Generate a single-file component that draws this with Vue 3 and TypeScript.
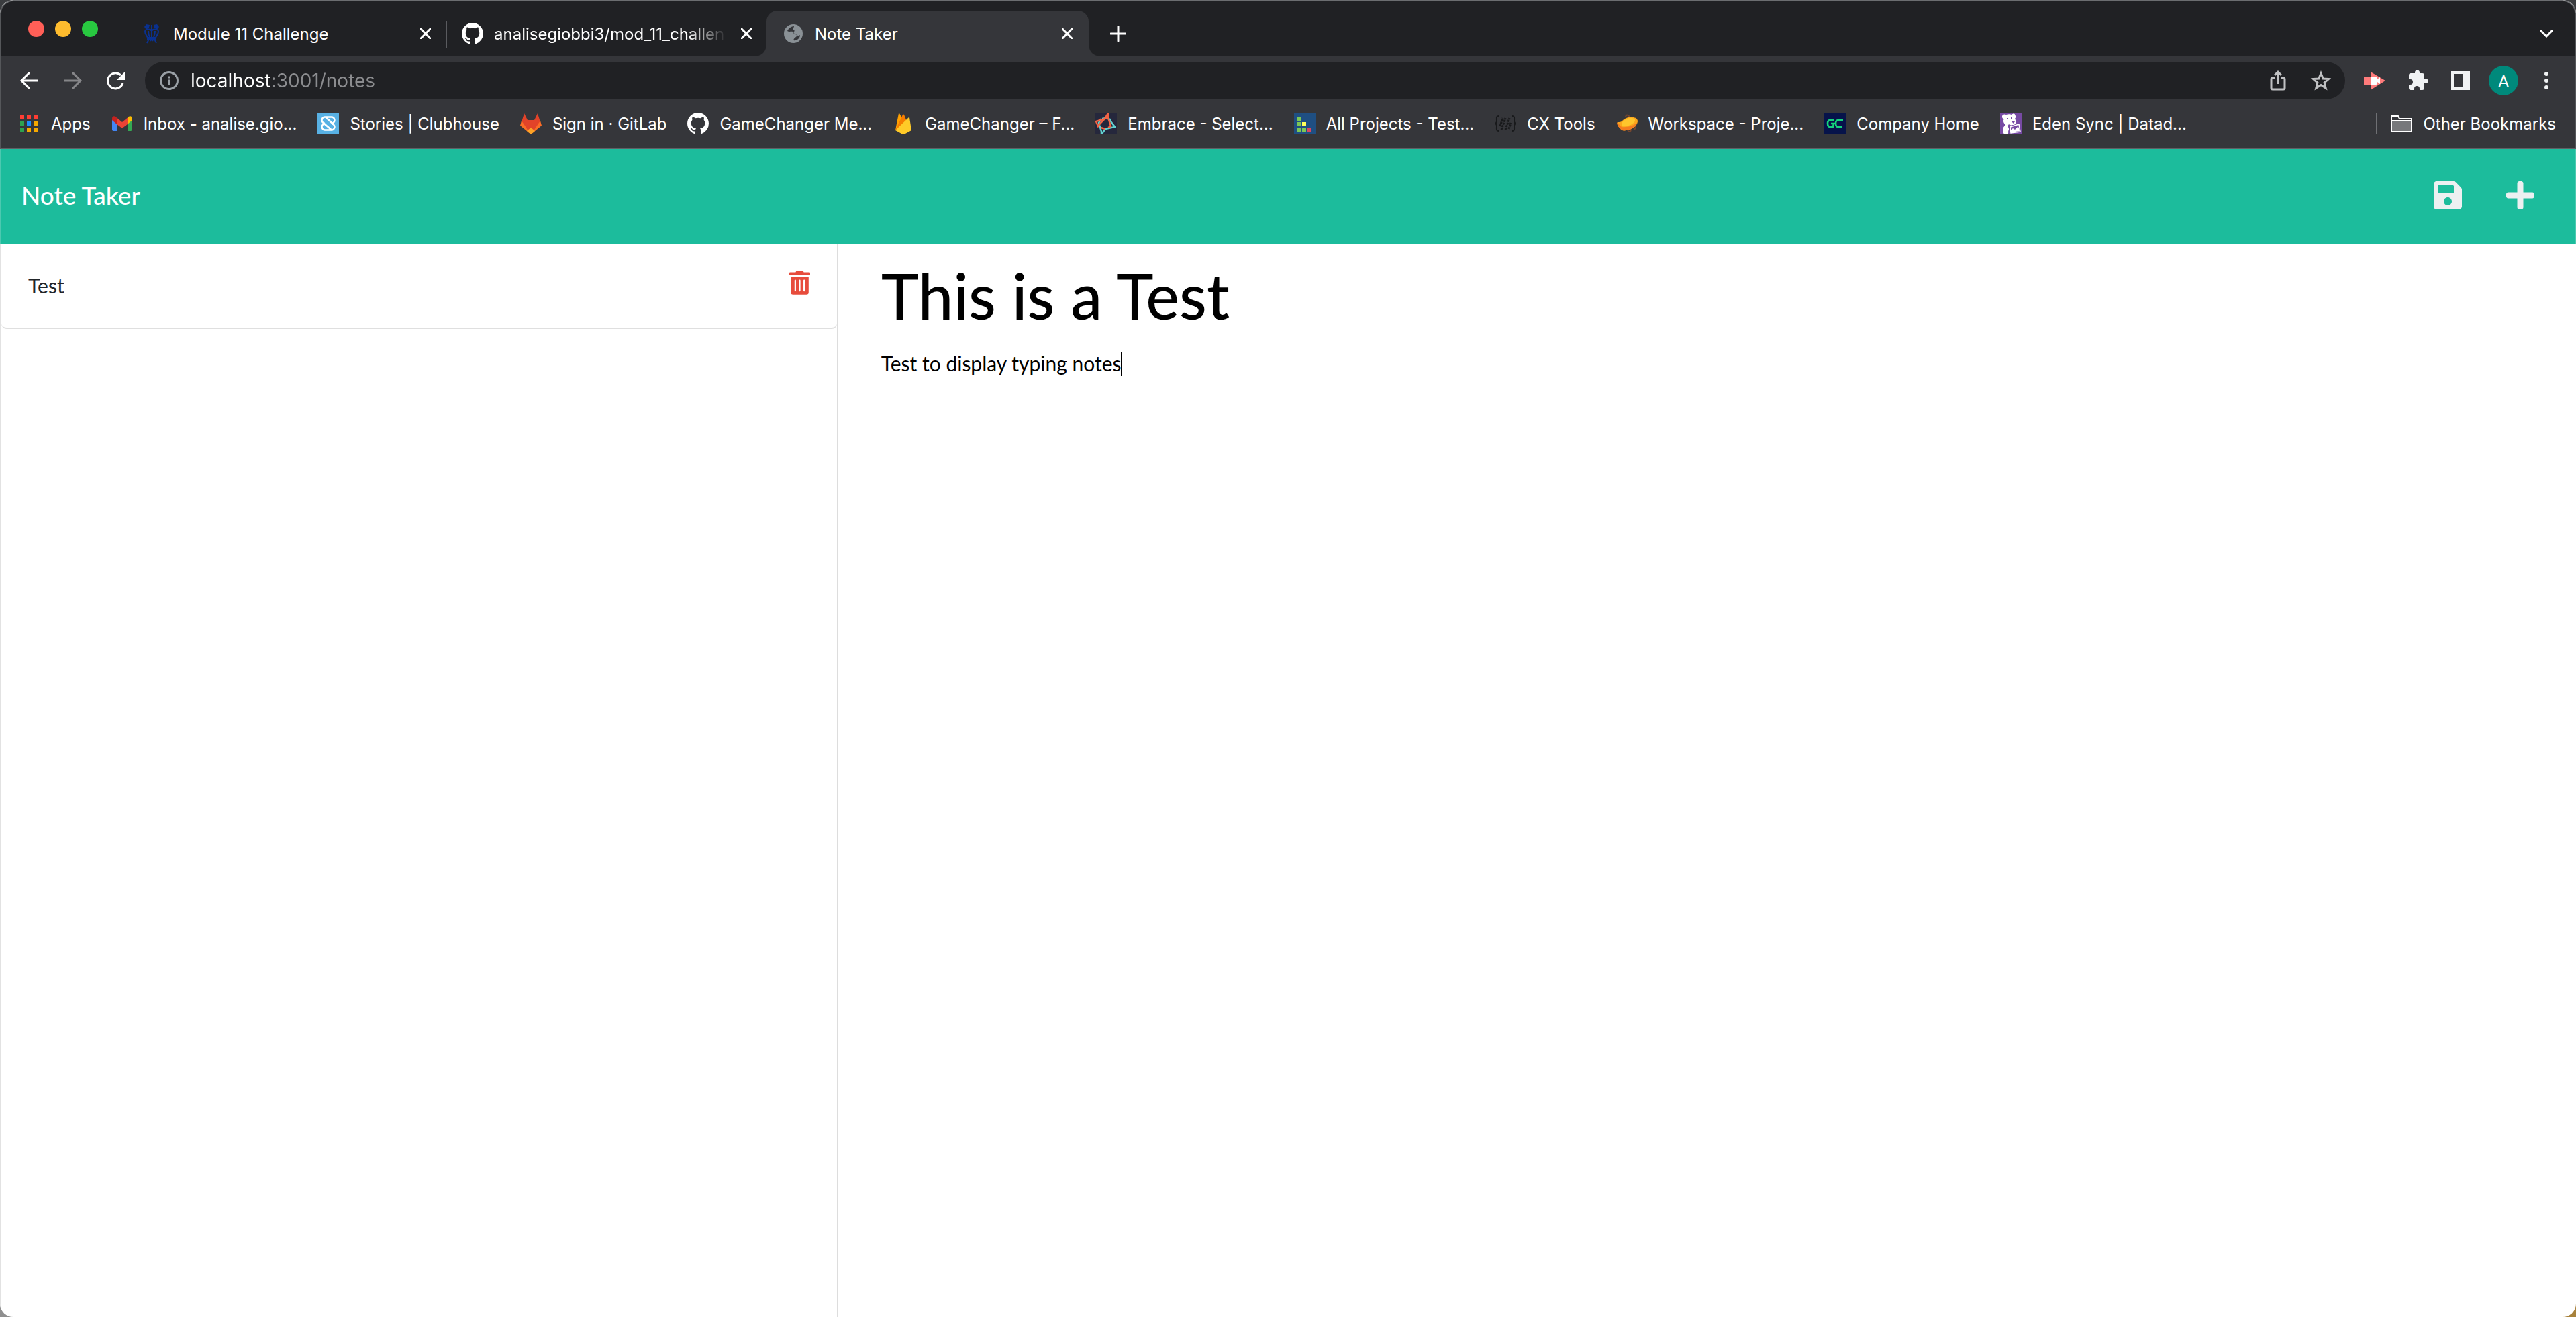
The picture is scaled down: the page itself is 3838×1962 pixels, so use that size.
<script setup lang="ts">
import { ref } from 'vue'

interface Bookmark {
  label: string
  icon: string
}

const github =
  '<path fill="#fff" transform="scale(2)" d="M8 0C3.58 0 0 3.58 0 8c0 3.54 2.29 6.53 5.47 7.59.4.07.55-.17.55-.38 0-.19-.01-.82-.01-1.49-2.01.37-2.53-.49-2.69-.94-.09-.23-.48-.94-.82-1.13-.28-.15-.68-.52-.01-.53.63-.01 1.08.58 1.23.82.72 1.21 1.87.87 2.33.66.07-.52.28-.87.51-1.07-1.78-.2-3.64-.89-3.64-3.95 0-.87.31-1.59.82-2.15-.08-.2-.36-1.02.08-2.12 0 0 .67-.21 2.2.82.64-.18 1.32-.27 2-.27s1.36.09 2 .27c1.53-1.04 2.2-.82 2.2-.82.44 1.1.16 1.92.08 2.12.51.56.82 1.27.82 2.15 0 3.07-1.87 3.75-3.65 3.95.29.25.54.73.54 1.48 0 1.07-.01 1.93-.01 2.2 0 .21.15.46.55.38A8.01 8.01 0 0 0 16 8c0-4.42-3.58-8-8-8z"/>'

const crest =
  '<g fill="none" stroke="#0a318f" stroke-width="2"><path d="M6 13c0-4 8-5 10-1 2-4 10-3 10 1 0 4-3 6-4 9H10c-1-3-4-5-4-9zM16 8v14M11 12c0 4 1 7 2 9M21 12c0 4-1 7-2 9M10 23h12M12 24l-3 6M13 24l2 3M20 24l3 6M19 24l-2 3"/></g><g fill="#0a318f"><path d="M5 6l3-4 5 1-1 4-4 3zM27 6l-3-4-5 1 1 4 4 3zM9 23h14v3H9zM15 3h2v7h-2z"/></g>'

const globe =
  '<circle cx="16" cy="16" r="14" fill="#8a9196"/><path fill="#35363a" d="M17 5c-4 0-8 3-10 7 3 2 6 0 8 1 2 1 1 4 3 4 3 0 4 2 2 4-2 1-3 2-4 5 5 1 10-3 10-8-2 2-4 1-6-1-3-1-4-2-3-4 1-1 1-2-1-3-1-2 1-3 1-5z"/>'

const bookmarks: Bookmark[] = [
  {
    label: 'Inbox - analise.gio...',
    icon: '<path fill="#4285f4" d="M1 9l7 5v13H3.500a2.500 2.500 0 0 1-2.500-2.500z"/><path fill="#34a853" d="M31 9l-7 5v13h4.500a2.500 2.500 0 0 0 2.500-2.500z"/><path fill="#fbbc04" d="M24 7.500C27 4 31 5 31 9v2l-7 6z"/><path fill="#ea4335" d="M8 7.500l8 6.500 8-6.500V17l-8 6-8-6z"/><path fill="#c5221f" d="M8 7.500C5 4 1 5 1 9v2l7 6z"/>',
  },
  {
    label: 'Stories | Clubhouse',
    icon: '<path fill="#58b1e4" d="M0 0h32v32H0z"/><path fill="none" stroke="#fff" stroke-width="2.400" stroke-linejoin="round" d="M11 6.500h10c4 0 6 5 3 8l-3 2.500M11 6.500c-4 0-6 5-3 8l13 11M21 25.500H11c-4 0-6-5-3-8l3-2.500M12 6.500l12 11c3 3 1 8-3 8"/>',
  },
  {
    label: 'Sign in · GitLab',
    icon: '<path fill="#e24329" d="M6 1l5 10h10l5-10 4 13-14 17L2 14z"/><path fill="#fc6d26" d="M2 12l14 20 14-20 2 7-16 13L0 19z"/><path fill="#e24329" d="M4 11h24L16 24z"/><path fill="#fca326" d="M16 22l6 5-6 5-6-5z"/>',
  },
  { label: 'GameChanger Me...', icon: github },
  {
    label: 'GameChanger – F...',
    icon: '<path fill="#ffa000" d="M4 26L9 1c0-1 1-1 1 0l5 9z"/><path fill="#f57c00" d="M4 26L15 3c0-1 1-1 2 0l4 10z"/><path fill="#ffca28" d="M4 26L24 7c1-1 1 0 1 0l3 19-11 6c-1 0-1 0-2 0z"/>',
  },
  {
    label: 'Embrace - Select...',
    icon: '<path fill="#25273c" d="M0 0h32v32H0z"/><g fill="none" stroke-width="2.500"><path stroke="#62d1cf" d="M9 9L5 15l4 13v4l6-8 14-3-6-8-1-3-6-2-6 1"/><path stroke="#f26444" d="M19 0v7l4 13-4 2M19 1l-5 8L1 13l3 7 4-5 6-6 6-1M8 22l7 2"/></g>',
  },
  {
    label: 'All Projects - Test...',
    icon: '<path fill="#1f4f82" d="M0 0h32v32H0z"/><path fill="#7dc855" d="M4 6h6v6H4zM4 14h6v6H4zM4 22h6v6H4zM12 22h6v6h-6z"/><path fill="#ffff5a" d="M12 14h6v6h-6z"/><path fill="#dd465e" d="M20 22h6v6h-6z"/>',
  },
  {
    label: 'CX Tools',
    icon: '<g fill="none" stroke="#18191b" stroke-width="2"><path d="M6 5c-4 0-3 3-3 7 0 3-1 4-3 4 2 0 3 1 3 4 0 4-1 7 3 7M26 5c4 0 3 3 3 7 0 3 1 4 3 4-2 0-3 1-3 4 0 4 1 7-3 7"/><path stroke-width="3" d="M8 20l4-12M10 25l6-17M16 25l6-17M21 24l3-9" stroke-dasharray="3 1"/></g>',
  },
  {
    label: 'Workspace - Proje...',
    icon: '<path fill="none" stroke="#76462f" stroke-width="2" d="M14 7c0-5 5-4 6 0M17 26c3 4 6 1 4-3M26 18c4 1 4 5 0 7"/><path fill="#fba61c" d="M2 14c3 0 5 0 7-2 4-4 9-6 15-5 5 0 8 2 8 6-1 7-8 12-17 13-4 1-8 0-9-3-3-2-5-5-4-9z"/><path fill="#ffc52c" d="M9 14c4-4 9-7 15-6 5 1 5 4 2 7-5 4-11 6-17 5z"/><path fill="#f57c20" d="M1 14l7 7c9 1 18-2 23-6-2 6-9 10-16 11-4 1-8 0-9-3-3-2-5-5-5-9z"/>',
  },
  {
    label: 'Company Home',
    icon: '<path fill="#06134a" d="M0 0h32v32H0z"/><path fill="none" stroke="#14d47b" stroke-width="2.600" stroke-linejoin="round" d="M14 11H9c-4 0-4 3-4 5s0 5 4 5h4l1-5h-4M28 11h-7c-4 0-4 3-4 5s0 5 4 5h6M15 16h3"/>',
  },
  {
    label: 'Eden Sync | Datad...',
    icon: '<path fill="#774aa4" d="M0 0h32v32H0z"/><path fill="#fff" d="M3 5c1-3 4-3 6-2 3-1 6-1 8 0 2-2 5-2 5 0 2 3 1 5 0 6l2 4c0 3-2 5-5 5-3 1-5 0-6-1l-2 3c2 2 3 5 1 7 1 2 0 4-3 5-3 0-5-2-4-5-2-4 1-7 3-9C5 15 4 12 6 9 3 9 3 7 3 5z"/><path fill="none" stroke="#fff" stroke-width="1.500" d="M15 21l13-4 2 11-14 2z"/><path fill="#fff" d="M16 26l3-3 3 2 4-4 2 1 1 5-13 2z"/><path fill="#774aa4" d="M10 8h2v2h-2zM16 7h2v2h-2zM17 13h5l-2 3z"/>',
  },
]

const url = ref('localhost:3001/notes')
const noteTitle = ref('This is a Test')
const noteText = ref('Test to display typing notes')
const notes = ref<string[]>(['Test'])
</script>

<template>
  <div class="window">
    <header class="chrome">
      <div class="tabstrip">
        <div class="lights">
          <button class="light red" aria-label="Close window"></button>
          <button class="light yellow" aria-label="Minimise window"></button>
          <button class="light green" aria-label="Zoom window"></button>
        </div>
        <div class="tab">
          <svg class="favicon" viewBox="0 0 32 32" v-html="crest"></svg>
          <span class="tab-title">Module 11 Challenge</span>
          <button class="close" aria-label="Close tab">
            <svg viewBox="0 0 16 16"><path d="M1 1l14 14M15 1L1 15" /></svg>
          </button>
        </div>
        <div class="tab divided">
          <svg class="favicon" viewBox="0 0 32 32" v-html="github"></svg>
          <span class="tab-title faded">analisegiobbi3/mod_11_challen</span>
          <button class="close" aria-label="Close tab">
            <svg viewBox="0 0 16 16"><path d="M1 1l14 14M15 1L1 15" /></svg>
          </button>
        </div>
        <div class="tab active">
          <svg class="favicon" viewBox="0 0 32 32" v-html="globe"></svg>
          <span class="tab-title">Note Taker</span>
          <button class="close" aria-label="Close tab">
            <svg viewBox="0 0 16 16"><path d="M1 1l14 14M15 1L1 15" /></svg>
          </button>
        </div>
        <button class="new-tab" aria-label="New tab">
          <svg viewBox="0 0 24 24"><path d="M12 1v22M1 12h22" /></svg>
        </button>
        <button class="tab-search" aria-label="Search tabs">
          <svg viewBox="0 0 20 12"><path d="M2 2l8 8 8-8" /></svg>
        </button>
      </div>

      <div class="toolbar">
        <button class="nav" aria-label="Back">
          <svg viewBox="0 0 32 32"><path d="M29 16H5M16 4L4 16l12 12" /></svg>
        </button>
        <button class="nav dim" aria-label="Forward">
          <svg viewBox="0 0 32 32"><path d="M3 16h24M16 4l12 12-12 12" /></svg>
        </button>
        <button class="nav" aria-label="Reload">
          <svg viewBox="0 0 32 32">
            <path d="M27 20a11.500 11.500 0 1 1-3-12" />
            <path class="solid" d="M30 3v12H18z" />
          </svg>
        </button>
        <div class="omnibox">
          <svg class="info" viewBox="0 0 28 28">
            <circle cx="14" cy="14" r="12.500" />
            <path d="M14 12.500V20M14 7.500v3" />
          </svg>
          <input v-model="url" class="url" aria-label="Address" spellcheck="false" />
          <button class="omni" aria-label="Share">
            <svg viewBox="0 0 32 32"><path d="M11 12H8a2 2 0 0 0-2 2v13a2 2 0 0 0 2 2h16a2 2 0 0 0 2-2V14a2 2 0 0 0-2-2h-3M16 21V4M11 8l5-5 5 5" /></svg>
          </button>
          <button class="omni" aria-label="Bookmark this page">
            <svg viewBox="0 0 32 32"><path d="M16 5l3.200 8 8.300.600-6.400 5.400 2.100 8.200L16 22.600l-7.200 4.600 2.100-8.200-6.400-5.400 8.300-.600z" /></svg>
          </button>
        </div>
        <div class="actions">
          <button aria-label="Screen recorder">
            <svg viewBox="0 0 32 32"><path fill="#ff7b7b" d="M0 10h10V3l22 13-22 14v-8H0z" /><path fill="#fff" d="M10 10h8a2 2 0 0 1 2 2v2l4-3v10l-4-3v2a2 2 0 0 1-2 2h-8z" /></svg>
          </button>
          <button aria-label="Extensions">
            <svg viewBox="0 0 32 32"><path fill="#f1f3f4" d="M28 13h-2V8a3 3 0 0 0-3-3h-4V4a3.500 3.500 0 0 0-7 0v1H6a3 3 0 0 0-3 3v6h2a4 4 0 0 1 0 8H3v5a3 3 0 0 0 3 3h5v-2a4 4 0 0 1 8 0v2h4a3 3 0 0 0 3-3v-7h2a3.500 3.500 0 0 0 0-7z" /></svg>
          </button>
          <button aria-label="Side panel">
            <svg viewBox="0 0 32 32"><path fill="#f1f3f4" fill-rule="evenodd" d="M2 2h28v28H2zM6 6v20h14V6z" /></svg>
          </button>
          <button aria-label="Profile"><span class="avatar">A</span></button>
          <button aria-label="Menu">
            <svg viewBox="0 0 32 32"><g fill="#f1f3f4"><circle cx="16" cy="6" r="3" /><circle cx="16" cy="16" r="3" /><circle cx="16" cy="26" r="3" /></g></svg>
          </button>
        </div>
      </div>

      <nav class="bookmarks" aria-label="Bookmarks">
        <a class="bookmark apps" href="#">
          <svg viewBox="0 0 26 26">
            <path fill="#a9a9a9" d="M0 1h6v6H0zM10 1h6v6h-6zM20 1h6v6h-6zM0 11h6v6H0zM10 11h6v6h-6zM20 11h6v6h-6zM0 21h6v6H0zM10 21h6v6h-6zM20 21h6v6h-6z" />
            <path fill="#ff3d33" d="M0 0h6v6H0zM10 0h6v6h-6zM20 0h6v6h-6z" />
            <path fill="#2ea24f" d="M0 10h6v6H0zM0 20h6v6H0z" />
            <path fill="#1a8cff" d="M10 10h6v6h-6z" />
            <path fill="#f5a800" d="M20 10h6v6h-6zM10 20h6v6h-6zM20 20h6v6h-6z" />
          </svg>
          <span>Apps</span>
        </a>
        <a v-for="b in bookmarks" :key="b.label" class="bookmark" href="#">
          <svg viewBox="0 0 32 32" v-html="b.icon"></svg>
          <span>{{ b.label }}</span>
        </a>
        <button class="bookmark other">
          <svg viewBox="0 0 32 32">
            <path fill="#77787b" d="M2 12h28v16H2z" />
            <path fill="none" stroke="#fff" stroke-width="2" d="M1 27V5h10l2 4h18v19H1zM1 12h30" />
          </svg>
          <span>Other Bookmarks</span>
        </button>
      </nav>
    </header>

    <div class="navbar">
      <a class="brand" href="#">Note Taker</a>
      <div class="navbar-actions">
        <button aria-label="Save note">
          <svg viewBox="0 0 448 512"><path d="M433.941 129.941l-83.882-83.882A48 48 0 0 0 316.118 32H48C21.490 32 0 53.490 0 80v352c0 26.510 21.490 48 48 48h352c26.510 0 48-21.490 48-48V163.882a48 48 0 0 0-14.059-33.941zM224 416c-35.346 0-64-28.654-64-64 0-35.346 28.654-64 64-64s64 28.654 64 64c0 35.346-28.654 64-64 64zm96-304.520V212c0 6.627-5.373 12-12 12H76c-6.627 0-12-5.373-12-12V108c0-6.627 5.373-12 12-12h228.520c3.183 0 6.235 1.264 8.485 3.515l3.480 3.480A11.996 11.996 0 0 1 320 111.480z" /></svg>
        </button>
        <button aria-label="New note">
          <svg viewBox="0 0 448 512"><path d="M416 208H272V64c0-17.670-14.330-32-32-32h-32c-17.670 0-32 14.330-32 32v144H32c-17.670 0-32 14.330-32 32v32c0 17.670 14.330 32 32 32h144v144c0 17.670 14.330 32 32 32h32c17.670 0 32-14.330 32-32V304h144c17.670 0 32-14.330 32-32v-32c0-17.670-14.330-32-32-32z" /></svg>
        </button>
      </div>
    </div>

    <main class="content">
      <aside class="sidebar">
        <ul class="notes">
          <li v-for="note in notes" :key="note" class="note">
            <span>{{ note }}</span>
            <button class="delete" :aria-label="'Delete ' + note">
              <svg viewBox="0 0 448 512"><path d="M32 464a48 48 0 0 0 48 48h288a48 48 0 0 0 48-48V128H32zm272-256a16 16 0 0 1 32 0v224a16 16 0 0 1-32 0zm-96 0a16 16 0 0 1 32 0v224a16 16 0 0 1-32 0zm-96 0a16 16 0 0 1 32 0v224a16 16 0 0 1-32 0zM432 32H312l-9.400-18.700A24 24 0 0 0 281.100 0H166.800a23.720 23.720 0 0 0-21.400 13.300L136 32H16A16 16 0 0 0 0 48v32a16 16 0 0 0 16 16h416a16 16 0 0 0 16-16V48a16 16 0 0 0-16-16z" /></svg>
            </button>
          </li>
        </ul>
      </aside>
      <section class="editor">
        <input v-model="noteTitle" class="note-title" aria-label="Note title" spellcheck="false" />
        <div class="note-body">
          <textarea v-model="noteText" class="note-text" aria-label="Note text" rows="1" spellcheck="false"></textarea>
          <span class="caret"></span>
        </div>
      </section>
    </main>
  </div>
</template>

<style>
body {
  margin: 0;
  background:
    linear-gradient(#3a3c3f 50%, transparent 50%),
    linear-gradient(90deg, #8f8f8f 50%, #a8823c 50%);
}
</style>

<style scoped>
* {
  box-sizing: border-box;
}
button,
input,
textarea {
  margin: 0;
  padding: 0;
  border: 0;
  outline: 0;
  background: none;
  color: inherit;
  font: inherit;
}
button {
  display: flex;
  align-items: center;
  justify-content: center;
}
a {
  color: inherit;
  text-decoration: none;
}
svg {
  display: block;
  flex: none;
}
.window {
  display: flex;
  flex-direction: column;
  min-height: 100vh;
  overflow: hidden;
  border-radius: 20px;
  background: #fff;
  font-family: Lato, "Liberation Sans", sans-serif;
  font-size: 30px;
}

/* Browser frame */
.chrome {
  border: 2px solid #55575a;
  border-top-color: #6b6d70;
  border-bottom-color: #5f6064;
  border-radius: 20px 20px 0 0;
  background: #35363a;
  color: #fff;
  font-family: Inter, Roboto, sans-serif;
  font-size: 24px;
}
.tabstrip {
  display: flex;
  align-items: stretch;
  height: 82px;
  border-radius: 18px 18px 0 0;
  background: #202124;
}
.lights {
  display: flex;
  gap: 16px;
  width: 184px;
  padding: 29px 0 0 40px;
}
.light {
  width: 24px;
  height: 24px;
  border-radius: 50%;
}
.red {
  background: #ff5f57;
}
.yellow {
  background: #febc2e;
}
.green {
  background: #28c840;
}
.tab {
  position: relative;
  display: flex;
  align-items: center;
  gap: 16px;
  width: 478px;
  margin-top: 14px;
  padding: 0 18px 0 24px;
}
.divided::before {
  content: "";
  position: absolute;
  top: 15px;
  left: 0;
  width: 2px;
  height: 40px;
  background: #5a5b5f;
}
.tab.active {
  width: 480px;
  padding-right: 20px;
  border-radius: 16px 16px 0 0;
  background: #35363a;
}
.active::before,
.active::after {
  content: "";
  position: absolute;
  bottom: 0;
  width: 16px;
  height: 16px;
}
.active::before {
  right: 100%;
  background: radial-gradient(circle at 0 0, #202124 15px, #35363a 16px);
}
.active::after {
  left: 100%;
  background: radial-gradient(circle at 100% 0, #202124 15px, #35363a 16px);
}
.favicon {
  width: 32px;
  height: 32px;
}
.tab-title {
  flex: 1;
  overflow: hidden;
  white-space: nowrap;
}
.faded {
  mask-image: linear-gradient(90deg, #000 calc(100% - 60px), transparent);
}
.close {
  width: 24px;
  height: 24px;
}
.close svg {
  width: 16px;
  height: 16px;
}
.close path,
.new-tab path,
.tab-search path {
  fill: none;
  stroke: #fff;
  stroke-width: 3;
  stroke-linecap: round;
}
.new-tab {
  width: 88px;
  padding-top: 14px;
}
.new-tab svg {
  width: 24px;
  height: 24px;
}
.tab-search {
  width: 52px;
  margin: 0 16px 0 auto;
  padding-top: 14px;
}
.tab-search svg {
  width: 20px;
  height: 12px;
}
.toolbar {
  display: flex;
  align-items: center;
  height: 72px;
  padding: 0 10px 0 22px;
}
.nav {
  width: 64px;
  height: 56px;
  padding-right: 24px;
}
.nav svg {
  width: 32px;
  height: 32px;
}
.nav path {
  fill: none;
  stroke: #fff;
  stroke-width: 3;
}
.nav .solid {
  fill: #fff;
  stroke: none;
}
.dim {
  opacity: 0.4;
}
.omnibox {
  display: flex;
  flex: 1;
  align-items: center;
  height: 56px;
  margin-right: 12px;
  padding: 0 20px 0 22px;
  border-radius: 28px;
  background: #202124;
}
.info {
  width: 28px;
  height: 28px;
  fill: none;
  stroke: #9aa0a6;
  stroke-width: 3;
}
.url {
  flex: 1;
  min-width: 0;
  height: 56px;
  padding-left: 18px;
  background: linear-gradient(90deg, #fff 141px, #8b8c8f 141px);
  background-clip: text;
  -webkit-text-fill-color: transparent;
  font-size: 28px;
}
.omni {
  width: 32px;
  height: 32px;
  margin-left: 32px;
}
.omni svg {
  width: 32px;
  height: 32px;
  fill: none;
  stroke: #c0c1c3;
  stroke-width: 3;
}
.actions {
  display: flex;
  align-items: center;
}
.actions button {
  width: 64px;
  height: 56px;
}
.actions svg {
  width: 32px;
  height: 32px;
}
.avatar {
  width: 44px;
  height: 44px;
  border-radius: 50%;
  background: #00897b;
  font-family: Roboto, sans-serif;
  line-height: 46px;
}
.bookmarks {
  display: flex;
  align-items: center;
  gap: 31px;
  height: 64px;
  padding: 0 28px 8px;
}
.bookmark {
  display: flex;
  align-items: center;
  gap: 16px;
  height: 32px;
  white-space: nowrap;
}
.bookmark svg {
  width: 32px;
  height: 32px;
}
.bookmark.apps {
  gap: 20px;
}
.apps svg {
  width: 26px;
  height: 26px;
}
.bookmark.other {
  margin-left: auto;
  padding-left: 20px;
  border-left: 2px solid #6f7074;
}

/* Application */
.navbar {
  display: flex;
  align-items: center;
  justify-content: space-between;
  height: 141px;
  padding: 0 60px 4px 30px;
  border: 0 solid #4cc9b0;
  border-width: 0 2px;
  background: #1cbc9c;
  color: #fff;
}
.brand {
  font-size: 37px;
  font-weight: 500;
}
.navbar-actions {
  display: flex;
  gap: 66px;
}
.navbar-actions svg {
  width: 42px;
  height: 48px;
  fill: #ecf0f1;
}
.content {
  display: flex;
  flex: 1;
  border-left: 2px solid #e2e2e2;
}
.sidebar {
  width: 32.5%;
  border-right: 2px solid #dddddd;
}
.notes {
  margin: 0;
  padding: 0;
  list-style: none;
}
.note {
  display: flex;
  align-items: flex-start;
  justify-content: space-between;
  height: 127px;
  padding: 40px;
  border-bottom: 2px solid #dfdfdf;
  border-radius: 0 0 8px 8px;
  color: #212529;
  line-height: 45px;
}
.delete svg {
  width: 31px;
  height: 36px;
  fill: #e74c3c;
}
.editor {
  flex: 1;
  padding: 18px 64px;
  color: #000;
}
.note-title {
  display: block;
  width: 100%;
  height: 116px;
  font-size: 94px;
  font-weight: 500;
}
.note-body {
  display: flex;
  align-items: center;
  margin-top: 22px;
}
.note-text {
  field-sizing: content;
  height: 46px;
  overflow: hidden;
  line-height: 45px;
  white-space: pre;
  resize: none;
}
.caret {
  width: 2px;
  height: 36px;
  background: #000;
}
</style>
